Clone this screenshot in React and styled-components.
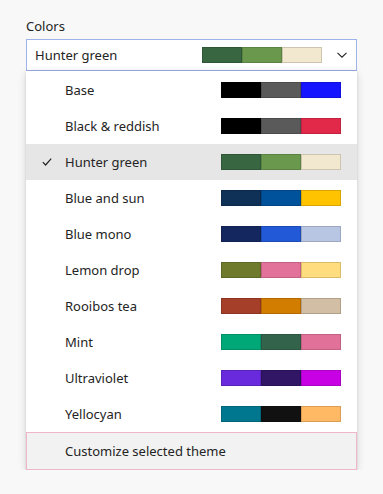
import React from "react";
import styled, { createGlobalStyle } from "styled-components";

const themes = [
  { name: "Base", colors: ["#000000", "#5a5a5a", "#1515ff"] },
  { name: "Black & reddish", colors: ["#000000", "#5a5a5a", "#e3294a"] },
  { name: "Hunter green", colors: ["#386641", "#6a994e", "#f2e8cf"] },
  { name: "Blue and sun", colors: ["#0f3057", "#00529b", "#ffc300"] },
  { name: "Blue mono", colors: ["#14285f", "#2259d6", "#b8c6e3"] },
  { name: "Lemon drop", colors: ["#707a2d", "#e2729a", "#ffdc7d"] },
  { name: "Rooibos tea", colors: ["#a63f2a", "#d27d00", "#d1bea4"] },
  { name: "Mint", colors: ["#00a878", "#34634b", "#e2719a"] },
  { name: "Ultraviolet", colors: ["#6929dc", "#311666", "#c800e4"] },
  { name: "Yellocyan", colors: ["#00778f", "#111111", "#ffb964"] },
];

const selected = "Hunter green";

const GlobalStyle = createGlobalStyle`
  body {
    margin: 0;
    background: #f8f8f8;
    font-family: "Noto Sans", "Open Sans", sans-serif;
    font-size: 13px;
    color: #242424;
  }
`;

const Page = styled.div`
  padding: 16px 26px 0 26px;
  width: 331px;
`;

const Label = styled.div`
  line-height: 20px;
  margin-bottom: 3px;
`;

const Select = styled.div`
  display: flex;
  align-items: center;
  height: 30px;
  padding: 0 9px 0 8px;
  background: #fff;
  border: 1px solid #9fb4ea;
`;

const SelectText = styled.span`
  flex: 1;
`;

const Chevron = styled.svg`
  margin-left: 15px;
  width: 10px;
  height: 10px;
`;

const Panel = styled.div`
  background: #fff;
  padding-top: 1px;
  box-shadow: 0 2px 8px rgba(0, 0, 0, 0.14), 0 0 2px rgba(0, 0, 0, 0.12);
`;

const Row = styled.div`
  display: flex;
  align-items: center;
  height: 36px;
  padding: 0 16px 0 0;
  background: ${p => (p.$active ? "#e6e6e6" : "transparent")};
`;

const Check = styled.span`
  width: 39px;
  display: flex;
  justify-content: center;
  padding-left: 2px;
  box-sizing: border-box;
`;

const Name = styled.span`
  flex: 1;
`;

const Swatch = styled.div`
  display: flex;
  height: 16px;
`;

const Chip = styled.div`
  width: 40px;
  height: 16px;
  box-sizing: border-box;
  background: ${p => p.$color};
  box-shadow: inset 0 0 0 1px rgba(0, 0, 0, 0.15);
`;

const Customize = styled.div`
  display: flex;
  align-items: center;
  height: 36px;
  padding-left: 38px;
  background: #f2f2f2;
  border: 1px solid #efb6ca;
`;

const Swatches = ({ colors }) => (
  <Swatch>
    {colors.map((c, i) => (
      <Chip key={i} $color={c} />
    ))}
  </Swatch>
);

export default function App() {
  const current = themes.find(t => t.name === selected);
  return (
    <>
      <GlobalStyle />
      <Page>
        <Label>Colors</Label>
        <Select>
          <SelectText>{current.name}</SelectText>
          <Swatches colors={current.colors} />
          <Chevron viewBox="0 0 10 10">
            <path d="M0.5 2.8 L5 7.2 L9.5 2.8" fill="none" stroke="#242424" strokeWidth="1.1" />
          </Chevron>
        </Select>
        <Panel>
          {themes.map(t => (
            <Row key={t.name} $active={t.name === selected}>
              <Check>
                {t.name === selected && (
                  <svg width="10" height="10" viewBox="0 0 10 10">
                    <path d="M0.8 5.2 L3.6 8 L9.2 1.6" fill="none" stroke="#242424" strokeWidth="1.2" />
                  </svg>
                )}
              </Check>
              <Name>{t.name}</Name>
              <Swatches colors={t.colors} />
            </Row>
          ))}
          <Customize>Customize selected theme</Customize>
        </Panel>
      </Page>
    </>
  );
}
